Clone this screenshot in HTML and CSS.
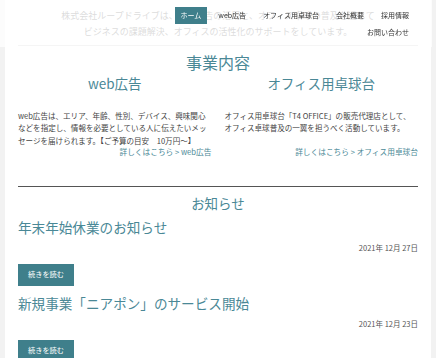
FILE: index.html
```html
<!DOCTYPE html>
<html lang="ja">
<head>
    <meta charset="UTF-8">
    <meta name="viewport" content="width=device-width, initial-scale=1.0">
    <title>株式会社ループドライブ</title>
    <link rel="stylesheet" href="styles.css">
</head>
<body>
    <nav class="site-nav">
        <ul class="menu">
            <li class="current"><a href="#">ホーム</a></li>
            <li><a href="#">web広告</a></li>
            <li><a href="#">オフィス用卓球台</a></li>
            <li><a href="#">会社概要</a></li>
            <li><a href="#">採用情報</a></li>
            <li><a href="#">お問い合わせ</a></li>
        </ul>
    </nav>

    <div class="page">
        <div class="intro">
            株式会社ループドライブは、web広告の活用と、オフィス卓球の普及を通じて<br>
            ビジネスの課題解決、オフィスの活性化のサポートをしています。
        </div>

        <section class="services">
            <h2 class="section-title">事業内容</h2>
            <div class="service-cols">
                <div class="service">
                    <h3>web広告</h3>
                    <p>web広告は、エリア、年齢、性別、デバイス、興味関心<br>などを指定し、情報を必要としている人に伝えたいメッ<br>セージを届けられます。【ご予算の目安　10万円～】</p>
                    <a class="more" href="#">詳しくはこちら &gt; web広告</a>
                </div>
                <div class="service">
                    <h3>オフィス用卓球台</h3>
                    <p>オフィス用卓球台「T4 OFFICE」の販売代理店として、<br>オフィス卓球普及の一翼を担うべく活動しています。</p>
                    <a class="more" href="#">詳しくはこちら &gt; オフィス用卓球台</a>
                </div>
            </div>
        </section>

        <hr class="divider">

        <section class="news">
            <h2 class="section-title small">お知らせ</h2>

            <div class="news-item">
                <h3>年末年始休業のお知らせ</h3>
                <div class="date">2021年 12月 27日</div>
                <a class="btn" href="#">続きを読む</a>
            </div>

            <div class="news-item">
                <h3>新規事業「ニアポン」のサービス開始</h3>
                <div class="date">2021年 12月 23日</div>
                <a class="btn" href="#">続きを読む</a>
            </div>
        </section>
    </div>
</body>
</html>
```

FILE: styles.css
```css
body {
    margin: 0;
    background: #f2f2f2;
    font-family: "Noto Sans CJK JP", "Noto Sans", sans-serif;
    color: #444;
}

a {
    text-decoration: none;
}

/* ナビ（半透明で上に重なる） */
.site-nav {
    position: fixed;
    top: 0;
    left: 0;
    width: 432px;
    height: 47px;
    background: rgba(255, 255, 255, 0.74);
    z-index: 10;
}

.menu {
    list-style: none;
    margin: 0 0 0 auto;
    padding: 7px 17px 0 0;
    width: 246px;
    display: flex;
    flex-wrap: wrap;
    justify-content: flex-end;
    column-gap: 5px;
}

.menu li a {
    display: block;
    padding: 0 6px;
    height: 17px;
    line-height: 17px;
    font-size: 7px;
    color: #333;
}

.menu li.current a {
    background: #3f7f8b;
    color: #fff;
}

/* 本体 */
.page {
    margin: 0 5px;
    background: #fff;
    padding: 8px 13px 40px;
}

.intro {
    text-align: center;
    font-size: 9px;
    line-height: 16px;
    color: #777;
    padding-bottom: 5px;
    border-bottom: 1.5px solid #d8d8d8;
}

.section-title {
    text-align: center;
    font-size: 16px;
    line-height: 20px;
    font-weight: normal;
    color: #4a8896;
    margin: 6px 0 0;
}

.section-title.small {
    font-size: 13.5px;
    line-height: 18px;
    margin-top: 7px;
}

.service-cols {
    display: flex;
    gap: 13px;
    margin-top: 2px;
}

.service {
    flex: 1 1 0;
    min-width: 0;
    display: flex;
    flex-direction: column;
}

.service h3 {
    text-align: center;
    font-size: 13.5px;
    line-height: 18px;
    font-weight: normal;
    color: #4a8896;
    margin: 0 0 18px;
}

.service p {
    font-size: 7.55px;
    line-height: 12.4px;
    margin: 0;
    color: #444;
    white-space: nowrap;
}

.more {
    margin-top: auto;
    text-align: right;
    font-size: 7.7px;
    line-height: 10px;
    color: #4a8896;
}

.divider {
    border: 0;
    border-top: 1.5px solid #555;
    margin: 29px 0 0;
}

.news-item h3 {
    font-size: 13.6px;
    line-height: 18px;
    font-weight: normal;
    color: #4a8896;
    margin: 8.5px 0 0;
}

.news-item:first-of-type h3 {
    margin-top: 6px;
}

.date {
    text-align: right;
    font-size: 7.5px;
    line-height: 10px;
    color: #555;
    margin-top: 7px;
}

.btn {
    display: inline-block;
    margin-top: 11px;
    width: 56px;
    height: 21.5px;
    line-height: 21.5px;
    text-align: center;
    font-size: 7.2px;
    background: #3f7f8b;
    color: #fff;
}
```
